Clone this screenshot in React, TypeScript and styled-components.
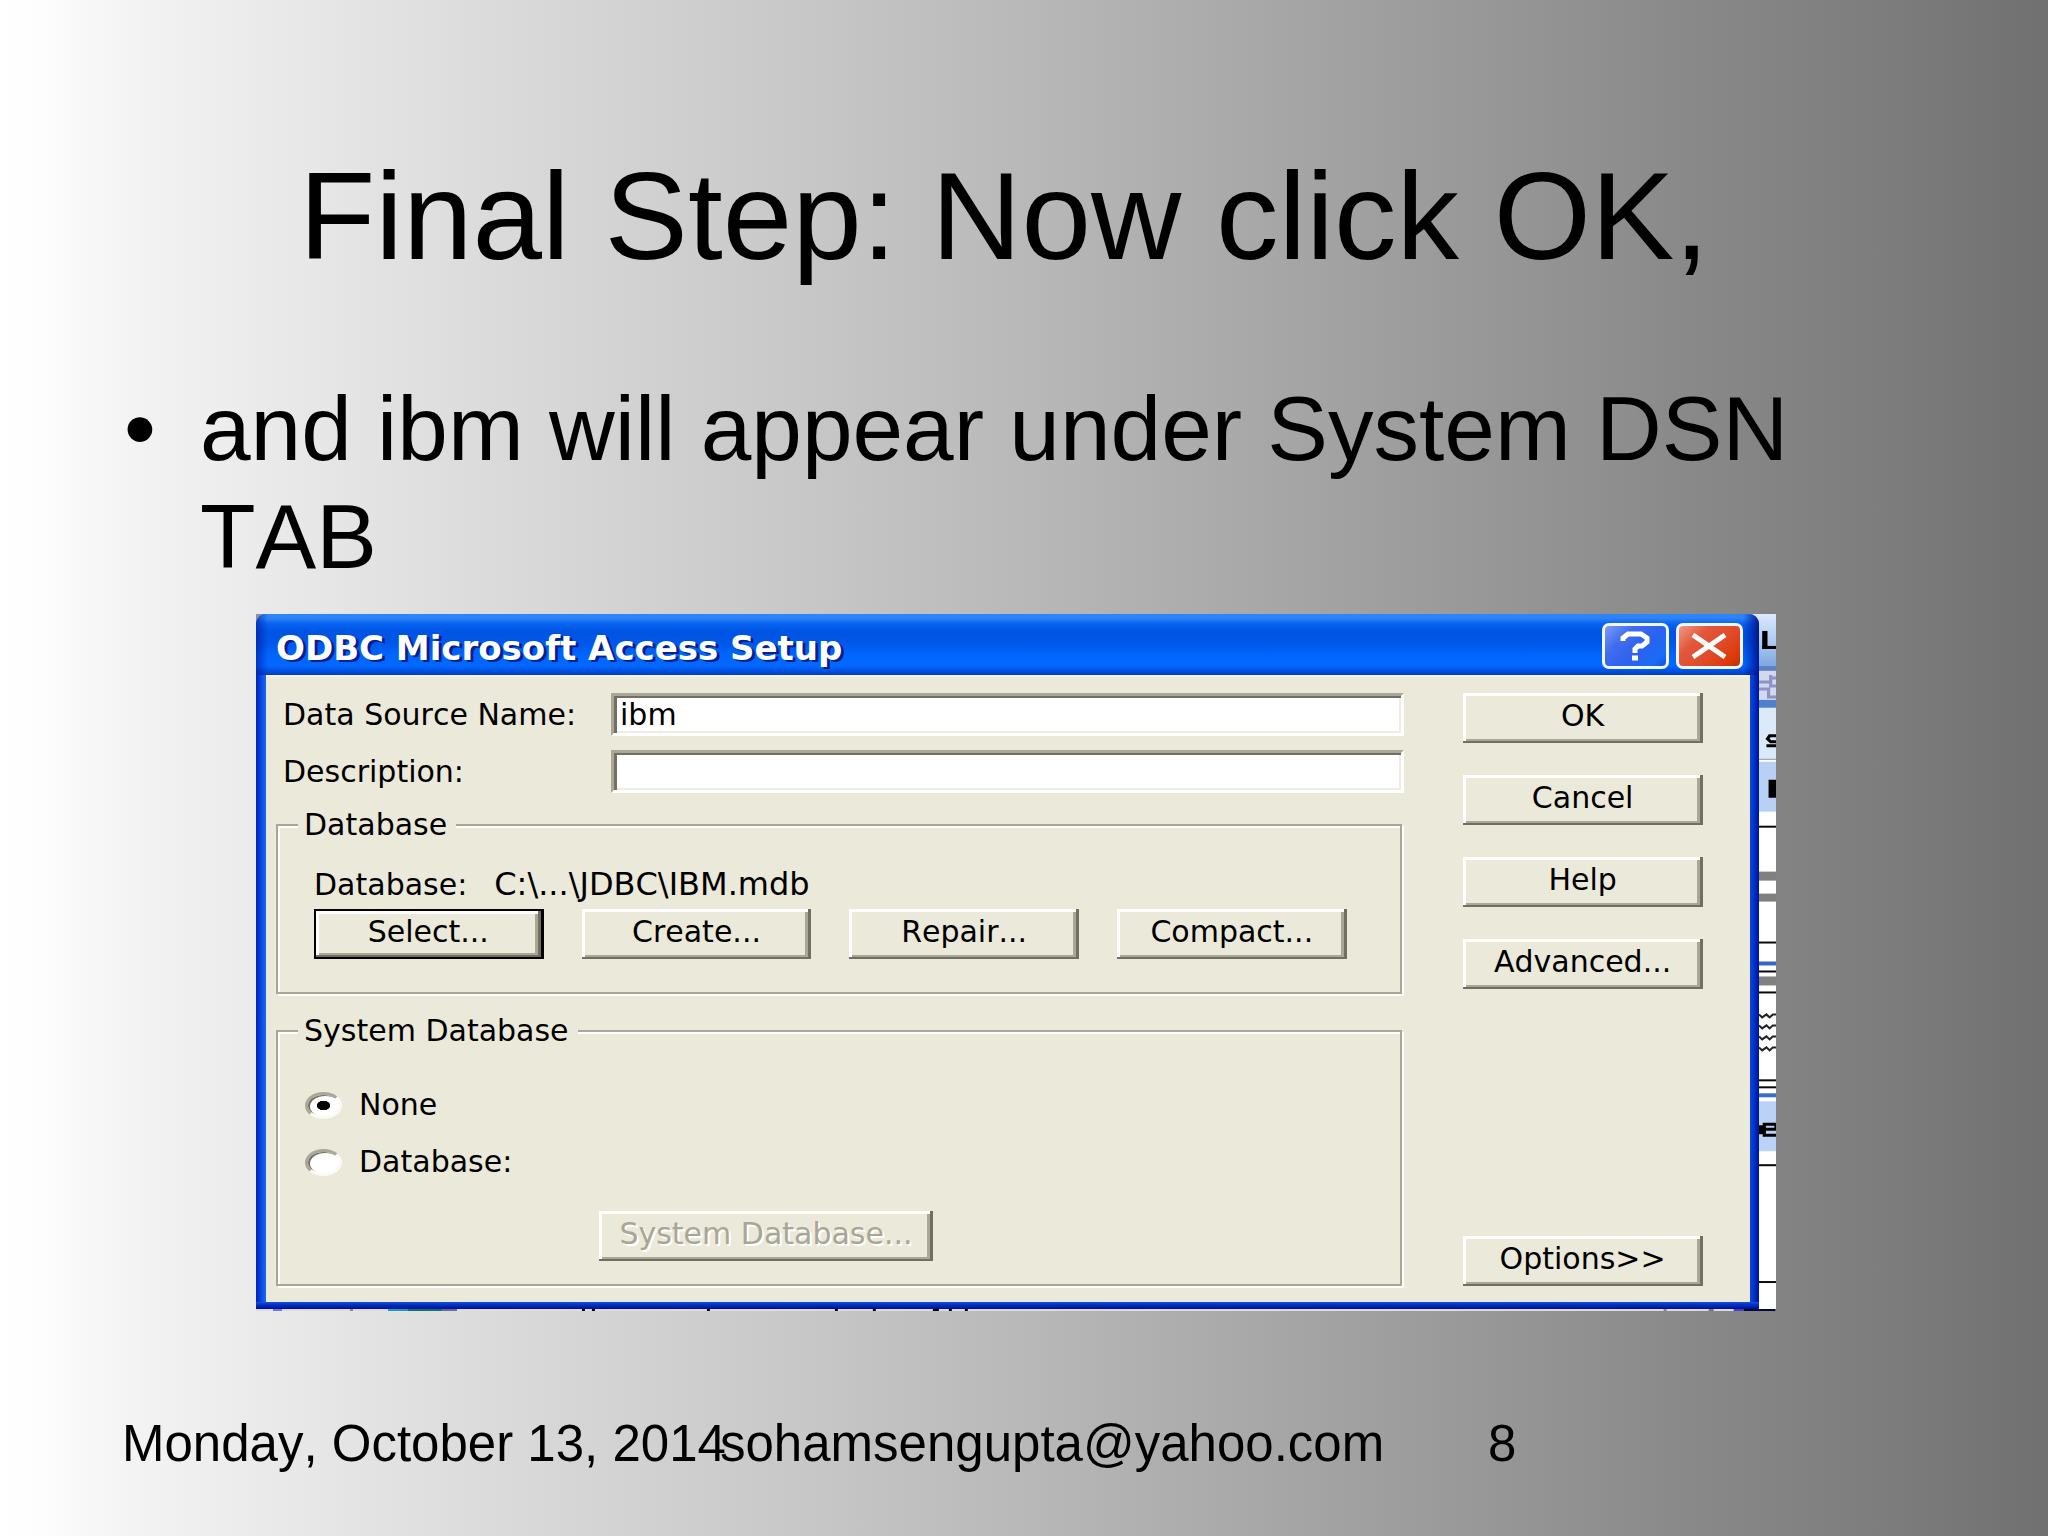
import React, { useState } from "react";
import styled, { createGlobalStyle, css } from "styled-components";

const face = "#ebe9d9";
const shade = "#aaa797";
const dark = "#716f62";
const uiFont = '"DejaVu Sans", Verdana, sans-serif';

const GlobalStyle = createGlobalStyle`
  *, *::before, *::after { box-sizing: border-box; }
  body { margin: 0; }
`;

const Slide = styled.main`
  display: flex;
  flex-direction: column;
  min-height: 100vh;
  padding: 144px 0 62px;
  color: #000;
  font-family: "Liberation Sans", Arial, sans-serif;
  font-kerning: none;
  background: linear-gradient(
    90deg,
    #ffffff 0%,
    #fdfdfd 2%,
    #f4f4f4 6%,
    #eaeaea 13%,
    #d8d8d8 26%,
    #c9c9c9 38%,
    #b7b7b7 51%,
    #a4a4a4 64%,
    #919191 77%,
    #888888 83%,
    #7d7d7d 92%,
    #707070 100%
  );
`;

const Heading = styled.h1`
  margin: 0 144px 87px 104px;
  font-size: 125px;
  line-height: 144px;
  font-weight: 400;
  text-align: center;
`;

const Points = styled.ul`
  margin: 0 144px 23px 124px;
  padding: 0;
  list-style: none;
  font-size: 91px;
  line-height: 108px;
`;

const Point = styled.li`
  display: flex;

  &::before {
    content: "•";
    flex: 0 0 76px;
  }
`;

const Capture = styled.figure`
  display: grid;
  grid-template-columns: 1fr 17px;
  margin: 0 13.3% 0 12.5%;
  background: linear-gradient(90deg, #8d8fa6 50%, #dbe7fb 50%);
`;

const SideStrip = styled.svg`
  display: block;
  width: 17px;
  height: 0;
  min-height: 100%;
`;

const BottomStrip = styled.svg`
  grid-column: 1 / -1;
  display: block;
  width: 100%;
  height: 2px;
`;

const Window = styled.section`
  display: flex;
  flex-direction: column;
  border-radius: 10px 10px 0 0;
  overflow: hidden;
  font-family: ${uiFont};
  font-size: 30px;
  line-height: 36px;
  background:
    linear-gradient(180deg, #1c50d8, #0030c8 40%, #00108c) bottom / 100% 7px no-repeat,
    linear-gradient(90deg, #0022b8, #0846e0 50%, #1a6cf0) left / 10px 100% no-repeat,
    linear-gradient(90deg, #0a48e0, #0030c8 50%, #00128c) right / 9px 100% no-repeat;
`;

const TitleBar = styled.header`
  display: flex;
  align-items: center;
  gap: 7px;
  height: 61px;
  padding: 3px 16px 0 20px;
  background:
    linear-gradient(90deg, rgba(0, 20, 160, 0.6), transparent 12px, transparent calc(100% - 16px), rgba(0, 16, 140, 0.9)),
    linear-gradient(180deg, #2f86f8 0, #2c84fa 4px, #0862f0 10px, #0054e4 18px, #0056e8 28px, #0066fe 42px, #0468ff 52px, #0050e0 57px, #003cc8 61px);
`;

const WindowTitle = styled.h2`
  flex: 1;
  margin: 0;
  padding-top: 3px;
  color: #fff;
  font-size: 34px;
  line-height: 40px;
  font-weight: 700;
  text-shadow: 3px 2px 0 #06208c;
`;

const CaptionButton = styled.button<{ $tone: "blue" | "red" }>`
  display: flex;
  align-items: center;
  justify-content: center;
  width: 67px;
  height: 46px;
  padding: 0;
  border: 3px solid #f2f6ff;
  border-radius: 7px;
  background: ${({ $tone }) =>
    $tone === "blue"
      ? "linear-gradient(135deg, #7c9cf6 0%, #3f6cec 30%, #2a62ee 60%, #1a6cf8 85%, #1450d8 100%)"
      : "linear-gradient(135deg, #f09a84 0%, #e2583c 30%, #e04a28 60%, #dc3a08 85%, #b83010 100%)"};

  svg {
    display: block;
    fill: none;
    stroke: #fff;
  }
`;

const Body = styled.form`
  display: flex;
  gap: 59px;
  margin: 0 9px 7px 10px;
  padding: 16px 47px 16px 10px;
  border-top: 2px solid #f6f5ee;
  background: ${face};
`;

const Main = styled.div`
  flex: 1;
  min-width: 0;
`;

const Side = styled.div`
  display: flex;
  flex-direction: column;
  gap: 32px;
  width: 240px;
`;

const FieldRow = styled.div`
  display: grid;
  grid-template-columns: 328px 1fr;
  align-items: center;
  padding-left: 7px;
  margin-bottom: 14px;
`;

const TextBox = styled.input`
  width: 100%;
  height: 43px;
  padding: 0 6px;
  border: 3px solid;
  border-color: ${shade} #fff #fff ${shade};
  border-radius: 0;
  outline: 0;
  background: #fff;
  box-shadow: inset 3px 2px 0 ${dark}, inset -2px -2px 0 #efede2;
  color: #000;
  font: inherit;
`;

const Group = styled.fieldset`
  min-width: 0;
  margin: 0 2px 19px 0;
  padding: 0 20px;
  border: 2px solid ${shade};
  box-shadow: 2px 2px 0 #fff, inset 2px 2px 0 #fff;

  &:last-child {
    margin-bottom: 0;
  }
`;

const Legend = styled.legend`
  padding: 0 9px 0 6px;
  background: ${face};
`;

const DatabasePane = styled.div`
  padding: 23px 33px 33px 16px;
`;

const PathLine = styled.div`
  display: flex;
  align-items: baseline;
  gap: 27px;
  margin-bottom: 6px;
`;

const Path = styled.span`
  font-size: 32px;
  line-height: 36px;
`;

const ButtonRow = styled.div`
  display: grid;
  grid-template-columns: repeat(4, 1fr);
  gap: 38px;
`;

const PushButton = styled.button<{ $default?: boolean }>`
  height: 50px;
  padding: 0 0 4px;
  border: 0;
  border-radius: 0;
  background: ${face};
  box-shadow: inset -3px -2px 0 ${dark}, inset 3px 3px 0 #fff, inset -6px -4px 0 ${shade};
  color: #000;
  font: inherit;
  white-space: nowrap;

  ${({ $default }) =>
    $default &&
    css`
      border: solid #000;
      border-width: 2px 3px 2px 2px;
    `}

  &:disabled {
    color: #a9a695;
    text-shadow: 2px 2px 0 #fff;
  }
`;

const OptionsButton = styled(PushButton)`
  margin-top: auto;
`;

const SystemPane = styled.div`
  display: flex;
  flex-direction: column;
  align-items: flex-start;
  gap: 21px;
  padding: 38px 0 23px 7px;
`;

const RadioLabel = styled.label`
  display: flex;
  align-items: center;
  gap: 17px;
`;

const Radio = styled.input`
  appearance: none;
  width: 37px;
  height: 27px;
  margin: 0;
  border: 3px solid;
  border-color: ${shade} #fbfaf4 #fbfaf4 ${shade};
  border-radius: 50%;
  background: #fff;
  box-shadow: inset 2px 1px 0 ${dark};

  &:checked {
    background: radial-gradient(ellipse 7px 5px at center, #000 90%, #fff 100%);
  }
`;

const SystemButton = styled(PushButton)`
  width: 334px;
  margin: 10px 0 0 294px;
`;

const Footer = styled.footer`
  display: grid;
  grid-template-columns: 598fr 768fr 560fr;
  margin-top: auto;
  padding-left: 122px;
  font-size: 51px;
  line-height: 60px;
  white-space: nowrap;

  > * {
    min-width: 0;
  }
`;

const lines = [212, 328, 357, 378, 466, 473, 551, 668];

function PageEdge() {
  return (
    <SideStrip viewBox="0 0 16 696" preserveAspectRatio="none" aria-hidden="true">
      <defs>
        <linearGradient id="edgeBar" x1="0" y1="0" x2="0" y2="1">
          <stop offset="0" stopColor="#dde9fc" />
          <stop offset="0.45" stopColor="#b7cff4" />
          <stop offset="1" stopColor="#7ea6e2" />
        </linearGradient>
      </defs>
      <rect width="16" height="696" fill="#fff" />
      <rect width="16" height="52" fill="url(#edgeBar)" />
      <rect y="52" width="16" height="5" fill="#5a82c4" />
      <rect y="57" width="16" height="29" fill="#d4d8ea" />
      <path d="M0 68h11v-7M11 64h5M0 75h9v8h7M11 68v4h5" fill="none" stroke="#8d92c8" strokeWidth="3" />
      <rect y="86" width="16" height="8" fill="#4f7fcd" />
      <rect y="94" width="16" height="51" fill="#dce9fb" />
      <rect y="145" width="16" height="1" fill="#8691a6" />
      <rect y="148" width="16" height="50" fill="#b9d0f5" />
      <rect x="3" y="17" width="5" height="18" />
      <rect x="3" y="32" width="13" height="3" />
      <path d="M16 122h-6l-2 3 3 3h5M7 132h9" fill="none" stroke="#000" strokeWidth="3" />
      <rect x="9" y="166" width="7" height="18" />
      <rect y="258" width="16" height="9" fill="#808080" />
      <rect y="280" width="16" height="8" fill="#808080" />
      <rect y="348" width="16" height="4" fill="#3568c2" />
      <rect y="363" width="16" height="9" fill="#808080" />
      {[401, 412, 423, 434].map((y) => (
        <path key={y} d={`M0 ${y}l3 3 4-3 3 3 3-3h3`} fill="none" stroke="#222" strokeWidth="2" />
      ))}
      <rect y="480" width="16" height="4" fill="#3b6dc5" />
      <rect y="488" width="16" height="50" fill="#bbd1f6" />
      <rect y="512" width="4" height="9" />
      <path d="M16 516H5v-5h11v5M5 516v6h11" fill="none" stroke="#000" strokeWidth="3" />
      {lines.map((y) => (
        <rect key={y} y={y} width="16" height="2" fill="#0a0a0a" />
      ))}
    </SideStrip>
  );
}

const specks: Array<[number, number, string]> = [
  [17, 9, "#6f78e4"],
  [94, 3, "#8a8a9a"],
  [132, 20, "#12a0b8"],
  [152, 34, "#0c7470"],
  [186, 15, "#6a6a9a"],
  [326, 3, "#000"],
  [336, 3, "#000"],
  [451, 3, "#000"],
  [579, 3, "#000"],
  [617, 3, "#000"],
  [677, 6, "#000"],
  [693, 3, "#000"],
  [709, 3, "#000"],
  [1408, 3, "#888"],
  [1453, 5, "#777"],
  [1478, 10, "#4a3cc0"],
  [1488, 32, "#06063a"],
];

function PageFoot() {
  return (
    <BottomStrip viewBox="0 0 1520 2" preserveAspectRatio="none" aria-hidden="true">
      <rect width="1520" height="2" fill="#dcdce2" />
      {specks.map(([x, width, fill]) => (
        <rect key={x} x={x} width={width} height="2" fill={fill} />
      ))}
    </BottomStrip>
  );
}

export default function App() {
  const [name, setName] = useState("ibm");
  const [description, setDescription] = useState("");
  const [system, setSystem] = useState("none");

  return (
    <>
      <GlobalStyle />
      <Slide>
        <Heading>Final Step: Now click OK,</Heading>
        <Points>
          <Point>and ibm will appear under System DSN TAB</Point>
        </Points>

        <Capture>
          <Window aria-label="ODBC Microsoft Access Setup">
            <TitleBar>
              <WindowTitle>ODBC Microsoft Access Setup</WindowTitle>
              <CaptionButton type="button" $tone="blue" aria-label="What's this">
                <svg width="32" height="30" viewBox="0 0 32 30" strokeWidth="5">
                  <path d="M4 10V7l5-4h13l6 4v4l-5 4h-4l-3 3v4M13 27h6" />
                </svg>
              </CaptionButton>
              <CaptionButton type="button" $tone="red" aria-label="Close window">
                <svg width="36" height="26" viewBox="0 0 36 26" strokeWidth="5">
                  <path d="M2 2l32 22M34 2L2 24" />
                </svg>
              </CaptionButton>
            </TitleBar>

            <Body onSubmit={(event) => event.preventDefault()}>
              <Main>
                <FieldRow>
                  <label htmlFor="dsn">Data Source Name:</label>
                  <TextBox id="dsn" value={name} onChange={(e) => setName(e.target.value)} />
                </FieldRow>
                <FieldRow>
                  <label htmlFor="description">Description:</label>
                  <TextBox id="description" value={description} onChange={(e) => setDescription(e.target.value)} />
                </FieldRow>

                <Group>
                  <Legend>Database</Legend>
                  <DatabasePane>
                    <PathLine>
                      <span>Database:</span>
                      <Path>{"C:\\...\\JDBC\\IBM.mdb"}</Path>
                    </PathLine>
                    <ButtonRow>
                      <PushButton type="button" $default>Select...</PushButton>
                      <PushButton type="button">Create...</PushButton>
                      <PushButton type="button">Repair...</PushButton>
                      <PushButton type="button">Compact...</PushButton>
                    </ButtonRow>
                  </DatabasePane>
                </Group>

                <Group>
                  <Legend>System Database</Legend>
                  <SystemPane>
                    <RadioLabel>
                      <Radio type="radio" name="system" checked={system === "none"} onChange={() => setSystem("none")} />
                      None
                    </RadioLabel>
                    <RadioLabel>
                      <Radio type="radio" name="system" checked={system === "database"} onChange={() => setSystem("database")} />
                      Database:
                    </RadioLabel>
                    <SystemButton type="button" disabled>System Database...</SystemButton>
                  </SystemPane>
                </Group>
              </Main>

              <Side>
                <PushButton type="submit">OK</PushButton>
                <PushButton type="button">Cancel</PushButton>
                <PushButton type="button">Help</PushButton>
                <PushButton type="button">Advanced...</PushButton>
                <OptionsButton type="button">{"Options>>"}</OptionsButton>
              </Side>
            </Body>
          </Window>
          <PageEdge />
          <PageFoot />
        </Capture>

        <Footer>
          <span>Monday, October 13, 2014</span>
          <span>sohamsengupta@yahoo.com</span>
          <span>8</span>
        </Footer>
      </Slide>
    </>
  );
}
